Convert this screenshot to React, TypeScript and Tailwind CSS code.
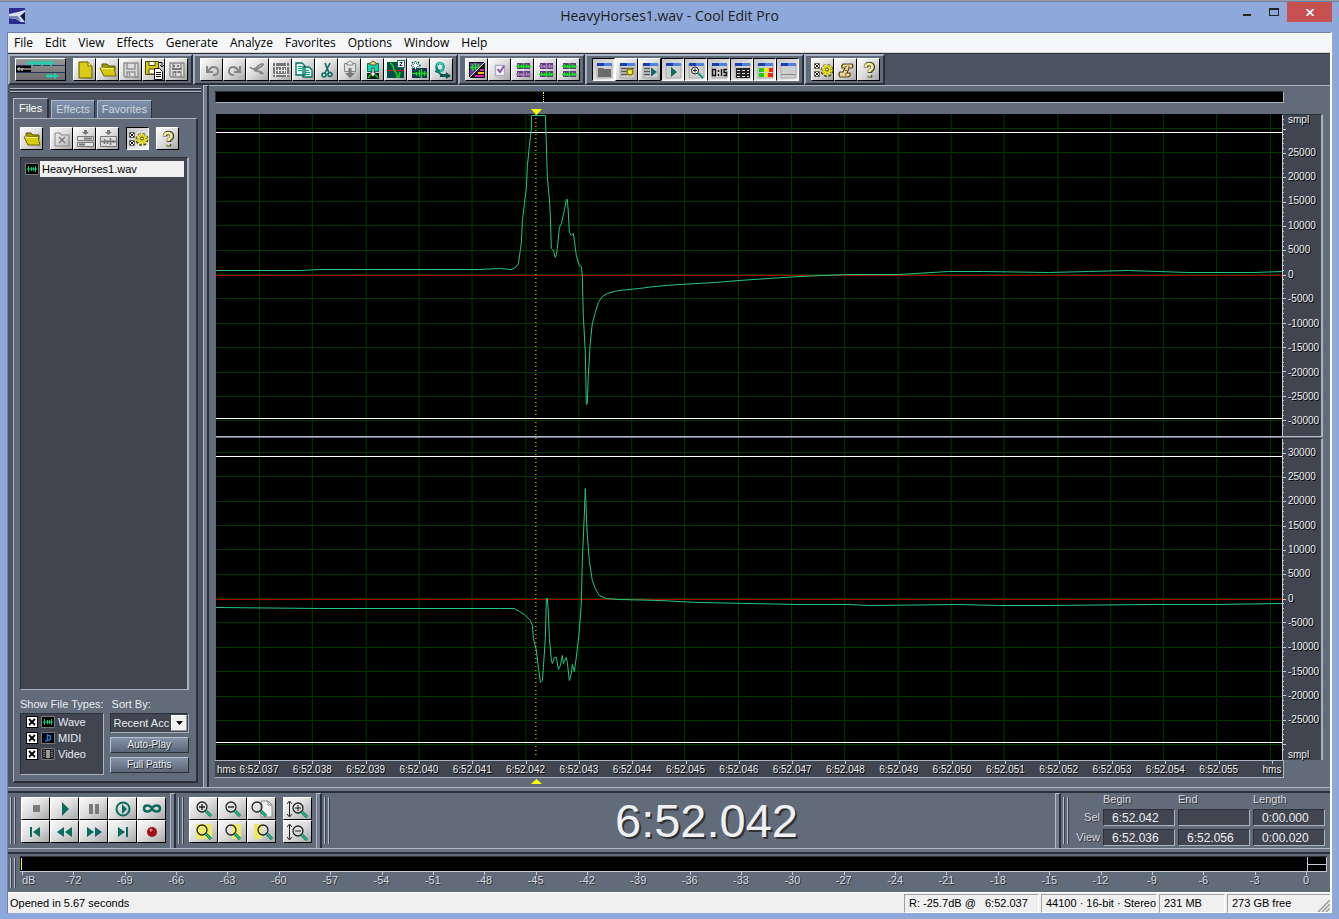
import { useState } from 'react'
import type { ReactNode } from 'react'

const menus = ['File', 'Edit', 'View', 'Effects', 'Generate', 'Analyze', 'Favorites', 'Options', 'Window', 'Help']
const times = Array.from({ length: 19 }, (_, i) => `6:52.0${37 + i}`)
const levels = Array.from({ length: 25 }, (_, i) => (i === 24 ? '0' : String(-72 + i * 3)))
const topScale = [25000, 20000, 15000, 10000, 5000, 0, -5000, -10000, -15000, -20000, -25000, -30000]
const bottomScale = [30000, 25000, 20000, 15000, 10000, 5000, 0, -5000, -10000, -15000, -20000, -25000]

const leftWave =
  '0,156 84,156 104,155 264,155 284,154 296,155 300,153 303,149 305,135 306,127 307,106 309,89 311,73 312,51 314,31 316,14 316,1 330,1 331,31 332,63 334,84 335,103 336,134 338,136 340,143 341,140 342,134 344,113 346,109 349,96 351,85 352,85 353,98 354,118 356,121 358,119 359,126 361,141 364,151 366,152 367,161 368,201 370,238 371,290 372,289 373,261 375,228 377,209 380,198 383,188 387,182 392,179 399,177 404,176 424,174 439,172 464,170 500,168 524,166 554,164 584,162 634,160 684,160 734,157 769,157 834,158 874,157 914,156 944,157 974,158 1040,158 1068,157'
const rightWave =
  '0,169 104,170 144,170 284,170 299,170 304,173 310,177 315,182 317,187 318,200 321,212 323,229 325,244 327,242 328,229 330,199 331,160 332,160 333,175 334,199 336,222 337,225 339,219 341,219 343,231 345,227 347,217 348,225 351,219 352,224 354,242 356,235 357,226 359,233 361,219 364,192 366,165 367,122 369,77 370,50 371,74 372,97 374,122 377,142 380,150 384,157 391,160 404,161 444,162 484,164 534,165 584,166 634,166 654,167 744,166 784,167 834,167 934,166 1000,166 1068,165'

const G = '#858585'
const T = '#0b6b5c'
const K = '#222222'

const lens = (
  <>
    <circle cx="9" cy="9" r="5" fill="none" stroke={K} strokeWidth="1.3" />
    <path d="M13 13l5 5" stroke="#063" strokeWidth="3" />
    <path d="M13 13l5 5" stroke="#12c8a0" strokeWidth="1.6" />
  </>
)
const gearList = (
  <>
    <path d="M2.500 4.500h5v5h-5zM2.500 12.500h5v5h-5z" fill="#fff" stroke="#666" />
    <path d="M3 5l4 4M7 5L3 9M3 13l4 4M7 13l-4 4" stroke="#111" />
    <circle cx="15" cy="11.500" r="4.500" fill="none" stroke="#4d4900" strokeWidth="4" strokeDasharray="2.200 1.300" />
    <circle cx="15" cy="11" r="4" fill="none" stroke="#e6da1c" strokeWidth="3" strokeDasharray="2 1.100" />
    <circle cx="15" cy="11" r="3.500" fill="#e6da1c" />
    <circle cx="15" cy="10.500" r="1.500" fill="#fff" stroke="#4d4900" />
  </>
)
const help = (
  <>
    <path d="M8 8.500Q8 5 11.500 5T15 8.500q0 1.500-3 3.500v2M12 16v2.500" fill="none" stroke="#4b4a3a" strokeWidth="4.500" />
    <path d="M7.500 8q0-3 3.500-3t3.500 3q0 2-3 3.500V13M11.500 15.500v2" fill="none" stroke="#f1ea94" strokeWidth="2.600" />
  </>
)
const folder = (
  <>
    <path d="M5 8V5h5l2 2h6v4" fill="#a39a00" stroke="#5d5700" />
    <path d="M3 9h14l2 8H7z" fill="#d7cb12" stroke="#6a6300" />
    <path d="M4 9.500h13" stroke="#fff36a" />
  </>
)
const windowFrame = (
  <>
    <path d="M4 5h15v14H4z" fill="#cfcfcf" stroke="#aaa" />
    <path d="M4 4h15v3H4z" fill="#4f80e0" />
    <path d="M4 4h7v3H4z" fill="#1a3fae" />
  </>
)
const stereo = (top: string, bottom: string) => (
  <>
    <path d="M5 4h13v6H5zM5 12h13v6H5z" fill="#69338e" />
    <path d="M4 7.500h15M6.500 5v4M9.500 6v3M11.500 4v6M14.500 5v4M16.500 6v3" stroke={top} strokeWidth="1.400" />
    <path d="M4 15.500h15M6.500 13v4M9.500 14v3M11.500 12v6M14.500 13v4M16.500 14v3" stroke={bottom} strokeWidth="1.400" />
  </>
)
const floppy = (c: string, fill: string) => (
  <>
    <path d="M4 4h14v14H5l-1-1z" fill={fill} stroke={c} strokeWidth="1.400" />
    <path d="M7 4v6h8V4M7 18v-5h8v5M9.500 14v3" fill="none" stroke={c} strokeWidth="1.400" />
  </>
)

const icons: Record<string, ReactNode> = {
  new: <><path d="M5 3h9l4 4v12H5z" fill="#dccb16" stroke="#5d5700" /><path d="M14 3v4h4" fill="#fff36a" stroke="#7a7300" /></>,
  folder,
  save: floppy('#919191', '#dedede'),
  saveAs: (
    <>
      <path d="M2.500 2.500h13v13h-13z" fill="#d7cb12" stroke="#4a4500" />
      <path d="M6 2.500h6v4H6zM6 10h6v5H6z" fill="#fff" stroke="#4a4500" />
      <path d="M11.500 9.500h5l3 3v8h-8z" fill="#fff" stroke="#111" />
      <path d="M13 13.500h5M13 15.500h5M13 17.500h5M16 3.500h3v3M17 6l2 2 2-2" stroke="#111" fill="none" />
    </>
  ),
  saveAll: <>{floppy('#8b8b8b', '#dedede')}<path d="M7 7h2M11 7h2M6 10h10M8 13h2M12 13h2" stroke="#777" strokeWidth="2" /></>,
  undo: <path d="M6 7v6h6M7 12q4-6 9-3 3 5-2 7h-2" fill="none" stroke={G} strokeWidth="2" />,
  redo: <path d="M16 7v6h-6M15 12q-4-6-9-3-3 5 2 7h2" fill="none" stroke={G} strokeWidth="2" />,
  repeat: <path d="M3 8q4 4 9 1t4-4-6 3 0 4 6 3M7 9l8 6" fill="none" stroke={G} strokeWidth="1.600" />,
  trim: (
    <>
      <path d="M3 4h16v14H3z" fill="#777" />
      <path d="M3 7.500h16M3 15.500h16M5.500 4v14M16.500 4v14M5 11.500h12M8.500 9v5M11.500 8v6M14.500 9v5" stroke="#e9e9e9" />
    </>
  ),
  copy: (
    <>
      <path d="M3 4h6l3 3v9H3zM10 8h6l3 3v7h-9z" fill="#d6fff2" stroke={T} strokeWidth="1.300" />
      <path d="M5 7.500h4M5 9.500h4M5 11.500h4M12 11.500h4M12 13.500h5M12 15.500h5" stroke="#0a9c80" />
    </>
  ),
  cut: (
    <>
      <path d="M9 4l4 10M14 4L9 14" stroke={T} strokeWidth="1.600" />
      <circle cx="8" cy="16" r="2" fill="none" stroke={T} strokeWidth="1.600" />
      <circle cx="14" cy="15.500" r="2" fill="none" stroke={T} strokeWidth="1.600" />
    </>
  ),
  paste: (
    <>
      <path d="M5.500 4.500h11v8h-11z" fill="#e2e2e2" stroke={G} />
      <path d="M8 6V4l3-2 3 2v2z" fill="#eee" stroke={G} />
      <path d="M9.500 9h3v5H16l-5 5-5-5h3.500z" fill="#777" />
    </>
  ),
  pasteNew: (
    <>
      <path d="M5.500 4.500h11v8h-11z" fill="#12d8a8" stroke={T} />
      <path d="M8 6V4l3-2 3 2v2z" fill="#f0e050" stroke="#555" />
      <path d="M5 14h12v6H5z" fill="#021" />
      <path d="M6 19l3-4M16 19l-3-4" stroke="#17c917" strokeWidth="1.500" />
      <path d="M10 9h2v5h2l-3 4-3-4h2z" fill="#fff" stroke="#111" strokeWidth=".7" />
    </>
  ),
  convert: (
    <>
      <path d="M2 3h17v16H2z" fill="#064e45" />
      <path d="M2 11.500h17" stroke="#e01515" />
      <path d="M5 4q3 1 4 7M9 11l3 4v3h2l1-5" fill="none" stroke="#15d81c" strokeWidth="1.500" />
      <path d="M12.500 1.500h7v7h-7z" fill="#fff" stroke={T} />
      <path d="M14.500 3.500h3l-3 3h3" stroke="#333" fill="none" />
    </>
  ),
  noise: (
    <>
      <path d="M4 9h15v10H4z" fill="#1a2f53" />
      <path d="M4 14.500h16M8.500 13v4M11.500 11v7M13.500 10v9M16.500 12v5" stroke="#18d528" strokeWidth="1.400" />
      <path d="M7.500 2v10M3 6.500h10M4 3l7 7M11 3l-7 7" stroke={T} strokeWidth="1.600" />
      <path d="M7.500 3v7M4 6.500h7M5 4l5 5M10 4L5 9" stroke="#fff" />
    </>
  ),
  loop: (
    <>
      <ellipse cx="9" cy="8" rx="3.500" ry="4" fill="none" stroke="#067d6b" strokeWidth="2.500" />
      <path d="M6 8q0-4 3-4t3 4-3 4" fill="none" stroke="#25e8bf" strokeWidth="1.300" />
      <path d="M4 12l3 1 4 3" fill="none" stroke="#067d6b" strokeWidth="2" />
      <path d="M9 15h6v-2l5 4-5 3v-2H9z" fill="#07594f" />
    </>
  ),
  spectral: (
    <>
      <path d="M3 3h16v16H3z" fill="#111" />
      <path d="M4 4h14L4 18z" fill="#6f379b" />
      <path d="M4 8.500h9M6.500 5v7M9.500 4v7M12.500 5v4" stroke="#14dd20" strokeWidth="1.500" />
      <path d="M9 17h9M14 11h4" stroke="#e020c0" strokeWidth="2" />
      <path d="M12 14h6" stroke="#ffc000" strokeWidth="2" />
      <path d="M3 19L19 3" stroke="#ddd" />
    </>
  ),
  check: <><path d="M6.500 6.500h9v10h-9z" fill="#fff" stroke="#b7a6cc" strokeWidth="1.400" /><path d="M8.500 10l2.500 3 4-6" fill="none" stroke="#8556b6" strokeWidth="2" /></>,
  left: stereo('#13e316', '#9d83ae'),
  right: stereo('#9d83ae', '#13e316'),
  both: stereo('#13e316', '#13e316'),
  winTab: <>{windowFrame}<path d="M5 9h5l1 1h7v8H5z" fill="#6a6a6a" /></>,
  winQ: <>{windowFrame}<path d="M5 9.500h13M5 12.500h6M5 15.500h6" stroke="#555" strokeWidth="1.500" /><circle cx="14" cy="13" r="3" fill="#f2e84c" stroke="#8a8300" strokeWidth="1.500" /></>,
  winPlay: <>{windowFrame}<path d="M5 9.500h6M5 12.500h6M5 15.500h6" stroke="#555" strokeWidth="1.500" /><path d="M12 8.500l6 4.500-6 4.500z" fill={T} /></>,
  play2: <>{windowFrame}<path d="M9 8l6 5-6 5z" fill={T} /></>,
  zoom: (
    <>
      {windowFrame}
      <circle cx="10" cy="11.500" r="3.500" fill="#eee" stroke={K} />
      <path d="M8 11.500h4M10 9.500v4" stroke={K} />
      <path d="M13 14l5 5" stroke="#07977a" strokeWidth="2" />
    </>
  ),
  clock: <>{windowFrame}<path d="M4.500 10.500h3v6h-3zM10.500 11v2M10.500 15v2M13.500 10v7M19 10.500h-3v3h2.500v3H15.500" fill="none" stroke="#111" strokeWidth="1.400" /></>,
  keys: (
    <>
      {windowFrame}
      <path d="M5 9h14v10H5z" fill="#222" />
      <path d="M6 11.500h3M11 11.500h3M16 11.500h2M6 14.500h3M11 14.500h3M16 14.500h2M6 17.500h3M11 17.500h3M16 17.500h2" stroke="#ddd" />
    </>
  ),
  meter: (
    <>
      {windowFrame}
      <path d="M5 9h14v4H5zM5 14h14v4H5z" fill="#1dcb1d" />
      <path d="M10 9h5v4h-5zM10 14h5v4h-5z" fill="#f1e51f" />
      <path d="M15 9h4v4h-4zM14 14h5v4h-5z" fill="#ee2222" />
    </>
  ),
  status: <>{windowFrame}<path d="M4 15.500h15" stroke="#888" /></>,
  gearList,
  scroll: (
    <>
      <path d="M8 5h9q2 2 0 4h-3l-2 5h3q1 3-2 4H5q-2-3 0-5h3l2-4H7q-1-2 1-4z" fill="#ead79c" stroke="#57400e" strokeWidth="1.200" />
      <path d="M14 9q1-2-1-2M12 14q-3 0-1 3M10 7.500h2M10 11.500h2" fill="none" stroke="#8c6b28" />
    </>
  ),
  help,
  closeFile: <><path d="M4 7V5h5l1 2h8v11H4z" fill="none" stroke={G} /><path d="M8 9l6 6M14 9l-6 6" stroke="#777" strokeWidth="1.400" /></>,
  insert: (
    <>
      <path d="M3.500 8.500h16v4h-16zM3.500 14.500h16v4h-16z" fill="#e6e6e6" stroke="#777" />
      <path d="M10 10.500h8M5 16.500h6" stroke="#777" strokeWidth="2" />
      <path d="M10 2h3v2h2l-3.500 3L8 4h2z" fill="#777" />
    </>
  ),
  insertWave: (
    <>
      <path d="M3.500 8.500h16v10h-16z" fill="#ddd" stroke="#777" />
      <path d="M4 13.500h15M7.500 11v5M10.500 12v4M13.500 10v7M16.500 12v3" stroke="#777" strokeWidth="1.500" />
      <path d="M10 2h3v2h2l-3.500 3L8 4h2z" fill="#777" />
    </>
  ),
  stop: <path d="M8 7h7v7H8z" fill="#7b7b7b" />,
  play: <path d="M8 4l7 7-7 7z" fill={T} />,
  pause: <path d="M6 6h4v10H6zM12 6h4v10h-4z" fill="#7b7b7b" />,
  playEnd: <><circle cx="11" cy="11" r="6.500" fill="none" stroke={T} strokeWidth="2" /><path d="M10 6l5 5-5 5z" fill={T} /></>,
  infinity: <path d="M11 10.500c-2-4-8-4-8 0s6 4 8 0 8-4 8 0-6 4-8 0z" fill="none" stroke={T} strokeWidth="2.500" />,
  first: <path d="M5 6h2v10H5zM15 6v10l-7-5z" fill={T} />,
  rewind: <path d="M10 6v10l-7-5zM18 6v10l-7-5z" fill={T} />,
  forward: <path d="M4 6v10l7-5zM12 6v10l7-5z" fill={T} />,
  last: <path d="M6 6v10l7-5zM14 6h2v10h-2z" fill={T} />,
  record: <><circle cx="11" cy="11" r="5" fill="#a30f16" /><circle cx="10" cy="9" r="1.500" fill="#e98a8a" /></>,
  zoomIn: <>{lens}<path d="M6 9h6M9 6v6" stroke={K} strokeWidth="1.400" /></>,
  zoomOut: <>{lens}<path d="M6 9h6" stroke={K} strokeWidth="1.400" /></>,
  zoomFull: <><path d="M10 3h7l4 4v12H10z" fill="#f2f2f2" stroke="#888" /><path d="M17 3v4h4" fill="none" stroke="#888" /><g transform="translate(-3 0)">{lens}</g></>,
  zoomSel: <><path d="M3 3h16v15H3z" fill="#eee86b" />{lens}</>,
  zoomLeft: <><path d="M10 3h9v15h-9z" fill="#eee86b" />{lens}</>,
  zoomRight: <><path d="M3 3h8v15H3z" fill="#eee86b" /><g transform="translate(3 0)">{lens}</g></>,
  vertIn: <><path d="M2.500 4v14M0 6l2.500-3L5 6M0 16l2.500 3L5 16" stroke={K} fill="none" /><g transform="translate(2 1)">{lens}<path d="M6 9h6M9 6v6" stroke={K} /></g></>,
  vertOut: <><path d="M2.500 4v14M0 6l2.500-3L5 6M0 16l2.500 3L5 16" stroke={K} fill="none" /><g transform="translate(2 1)">{lens}<path d="M6 9h6" stroke={K} /></g></>,
}

function IconButton({ name, pressed, wide }: { name: string; pressed?: boolean; wide?: boolean }) {
  return (
    <button
      aria-label={name}
      className={`${wide ? 'w-[29px]' : 'w-[23px]'} h-[23px] shrink-0 flex items-center justify-center border bg-linear-to-br ${
        pressed
          ? 'border-t-black border-l-black border-r-white border-b-white from-[#c4c4c4] to-[#f4f4f4]'
          : 'border-t-white border-l-white border-r-black border-b-black from-[#fafafa] via-[#dcdcdc] to-[#a8a8a8]'
      }`}
    >
      <svg className="w-[22px] h-[22px] shrink-0" viewBox="0 0 22 22">{icons[name]}</svg>
    </button>
  )
}

function ToolGroup({ children }: { children: ReactNode }) {
  return (
    <div className="flex items-center h-[31px] pl-[5px] pr-[3px] bg-[#626b7a] border-2 border-t-[#a9b2c0] border-l-[#a9b2c0] border-r-[#2b3038] border-b-[#2b3038]">
      {children}
    </div>
  )
}

function Gripper() {
  return (
    <div className="flex gap-[2px] py-1 shrink-0">
      <div className="w-[2px] border-l border-[#b4bdca] bg-[#3a404a]" />
      <div className="w-[2px] border-l border-[#b4bdca] bg-[#3a404a]" />
    </div>
  )
}

function Splitter() {
  return <div className="w-[6px] shrink-0 border-l border-t border-l-[#b0b9c7] border-t-[#b0b9c7] border-r-2 border-r-[#2b3038] bg-[#737d8d]" />
}

function Divider() {
  return <div className="h-[6px] shrink-0 border-t border-t-[#b0b9c7] border-b-2 border-b-[#2b3038] bg-[#6a7483]" />
}

function Channel({ points, scale, bottom }: { points: string; scale: number[]; bottom?: boolean }) {
  const lines = Array.from({ length: 13 }, (_, i) => 14 + Math.round(i * 24.35))
  return (
    <div className="flex flex-1 min-h-0">
      <div className="flex-1 min-w-0 bg-black">
        <svg className="block w-full h-full" viewBox="0 0 1068 322" preserveAspectRatio="none" shapeRendering="crispEdges" fill="none">
          {lines.map(y => <path key={y} d={`M0 ${y + 0.5}H1068`} stroke="#003800" />)}
          {Array.from({ length: 20 }, (_, i) => Math.round(43 + i * 53.3)).map(x => <path key={x} d={`M${x + 0.5} 0V322`} stroke="#003800" />)}
          <path d="M0 161.500H1068" stroke="#a80000" />
          <path d="M0 18.500H1068M0 304.500H1068" stroke="#ffffff" />
          <polyline points={points} stroke="#22c884" transform="translate(0 0.5)" />
          <path d={bottom ? 'M320.500 0V319' : 'M320.500 0V322'} stroke="#ffff00" strokeDasharray="1 3" />
        </svg>
      </div>
      <div className="w-[41px] shrink-0 flex border-r-2 border-t border-t-[#2b3038] border-[#a9b2c0] bg-[#40454f]">
        <svg className="w-1 h-full shrink-0 border-l border-[#c5ccd6]" viewBox="0 0 4 322" preserveAspectRatio="none" shapeRendering="crispEdges">
          {Array.from({ length: 64 }, (_, i) => <path key={i} d={`M0 ${Math.round(4 + i * 4.87) + 0.5}h${i % 5 === 2 ? 4 : 1}`} stroke="#dde1e7" />)}
        </svg>
        <div className="flex-1 flex flex-col pl-[2px] text-[10px] text-[#eef0f3] [text-shadow:1px_1px_0_#000]">
          {!bottom && <div className="h-[37px] shrink-0 leading-[10px]">smpl</div>}
          <div className={`flex-1 flex flex-col justify-between ${bottom ? 'pt-[13px]' : 'pb-[15px]'}`}>
            {scale.map(v => <div key={v} className="h-0 flex items-center">{v}</div>)}
          </div>
          {bottom && <div className="h-[40px] shrink-0 flex items-end leading-[11px]">smpl</div>}
        </div>
      </div>
    </div>
  )
}

function WaveIcon() {
  return (
    <svg className="w-[14px] h-3 shrink-0" viewBox="0 0 14 12">
      <path d="M.5.5h13v11H.5z" fill="#000" stroke="#777" />
      <path d="M2 6h10M3.500 3v6M6.500 4v4M8.500 4v4M10.500 3v6" stroke="#12d27c" />
    </svg>
  )
}

function FileType({ label, children }: { label: string; children: ReactNode }) {
  return (
    <label className="flex items-center h-4 gap-[3px]">
      <span className="relative flex w-3 h-3">
        <input type="checkbox" defaultChecked className="peer appearance-none w-3 h-3 bg-white border border-black" />
        <svg className="absolute inset-0 hidden peer-checked:block pointer-events-none" viewBox="0 0 12 12">
          <path d="M3 3l6 6M9 3L3 9" stroke="#000" strokeWidth="1.800" />
        </svg>
      </span>
      {children}
      {label}
    </label>
  )
}

function Sidebar() {
  const [tab, setTab] = useState('Files')
  return (
    <aside className="w-[195px] shrink-0 flex flex-col bg-[#4c5462] pl-[5px] pr-[5px] pb-1 text-[#e9ecf0]">
      <div className="mx-[-3px] mt-[3px] h-[2px] shrink-0 border-t border-[#b0b9c7] bg-[#2b3038]" />
      <div className="mx-[-3px] mt-[1px] h-[2px] shrink-0 border-t border-[#b0b9c7] bg-[#2b3038]" />
      <div className="flex items-end mt-[5px] gap-[2px] shrink-0">
        {['Files', 'Effects', 'Favorites'].map(t => (
          <button
            key={t}
            onClick={() => setTab(t)}
            className={
              tab === t
                ? 'h-5 px-[5px] bg-[#626b7a] border-t border-l border-r-2 border-t-[#b0b9c7] border-l-[#b0b9c7] border-r-[#2b3038] text-white'
                : 'h-[18px] px-1 bg-linear-to-b from-[#7f93ae] to-[#66758c] border-t border-l border-r border-t-[#b0b9c7] border-l-[#b0b9c7] border-r-[#2b3038] text-[#d0d6de]'
            }
          >
            {t}
          </button>
        ))}
      </div>
      <div className="flex-1 min-h-0 flex flex-col bg-[#626b7a] border border-t-[#a9b2c0] border-l-[#a9b2c0] border-r-2 border-b-2 border-r-[#2b3038] border-b-[#2b3038] pl-[6px] pr-[7px] pb-[6px]">
        <div className="flex h-[38px] pt-[1px] items-center shrink-0">
          <IconButton name="folder" />
          <div className="flex ml-[7px] mr-[7px]">
            <IconButton name="closeFile" />
            <IconButton name="insert" />
            <IconButton name="insertWave" />
          </div>
          <IconButton name="gearList" pressed />
          <div className="ml-[7px]"><IconButton name="help" /></div>
        </div>
        <ul className="flex-1 min-h-0 bg-[#40454f] border border-t-[#2b3038] border-l-[#2b3038] border-r-2 border-r-[#a9b2c0] border-b-[#a9b2c0] pl-1 pt-[3px] pr-[3px]">
          <li>
            <button className="w-full flex items-center gap-[1px] text-black">
              <WaveIcon />
              <span className="flex-1 text-left bg-[#f0f0f0] leading-4 pl-[2px]">HeavyHorses1.wav</span>
            </button>
          </li>
        </ul>
        <div className="flex mt-1 gap-[6px] shrink-0">
          <fieldset className="w-[83px] shrink-0 flex flex-col">
            <legend className="h-[19px] pt-[2px] whitespace-nowrap">Show File Types:</legend>
            <div className="h-[62px] bg-[#40454f] border border-t-[#2b3038] border-l-[#2b3038] border-r-[#a9b2c0] border-b-[#a9b2c0] pl-[5px]">
              <FileType label="Wave"><WaveIcon /></FileType>
              <FileType label="MIDI">
                <svg className="w-[14px] h-3" viewBox="0 0 14 12">
                  <path d="M.5.5h13v11H.5z" fill="#000" stroke="#777" />
                  <path d="M6.500 9V3l3 1v4M4 9h2M7 8h2" fill="none" stroke="#1f7be0" strokeWidth="1.500" />
                </svg>
              </FileType>
              <FileType label="Video">
                <svg className="w-[14px] h-3" viewBox="0 0 14 12">
                  <path d="M.5.5h13v11H.5z" fill="#222" stroke="#777" />
                  <path d="M5 2h4v8H5z" fill="#999" />
                  <path d="M3 2v8M11 2v8" stroke="#ccc" strokeDasharray="1 1" />
                </svg>
              </FileType>
            </div>
          </fieldset>
          <div className="flex-1 min-w-0 flex flex-col">
            <label htmlFor="sort" className="h-[19px] pt-[2px] pl-[2px]">Sort By:</label>
            <div className="relative h-5">
              <select id="sort" className="appearance-none w-full h-5 pl-[3px] pr-[19px] bg-[#40454f] border border-t-[#2b3038] border-l-[#2b3038] border-r-[#a9b2c0] border-b-[#a9b2c0] text-[#e9ecf0]">
                <option>Recent Access</option>
                <option>Filename</option>
              </select>
              <span className="absolute right-[2px] top-[2px] w-4 h-4 bg-[#f0f0f0] border border-white border-r-[#999] border-b-[#999] flex items-center justify-center pointer-events-none">
                <svg className="w-[7px] h-1" viewBox="0 0 7 4"><path d="M0 0h7L3.500 4z" /></svg>
              </span>
            </div>
            {['Auto-Play', 'Full Paths'].map(t => (
              <button key={t} className="mt-1 h-4 text-[10px] leading-none bg-linear-to-b from-[#8593a8] to-[#5c6778] border border-t-[#b8c3d2] border-l-[#b8c3d2] border-r-[#2b3038] border-b-[#2b3038] [text-shadow:1px_1px_0_#222]">
                {t}
              </button>
            ))}
          </div>
        </div>
      </div>
    </aside>
  )
}

function Editor() {
  return (
    <main className="flex-1 min-w-0 flex flex-col bg-[#626b7a] border-t border-[#a9b2c0] pl-[6px] pr-[7px] pb-[9px]">
      <div className="relative mt-[5px] mr-[39px] h-3 shrink-0 bg-black border border-t-[#2b3038] border-l-[#2b3038] border-r-[#a9b2c0] border-b-[#a9b2c0]">
        <div className="absolute top-0 bottom-0 left-[30.600%] border-l border-dotted border-[#ffff00]" />
      </div>
      <div className="relative mt-[11px] flex-1 min-h-0 flex flex-col pl-[1px]">
        <Channel points={leftWave} scale={topScale} />
        <div className="h-[2px] shrink-0 bg-[#6a7483] border-t border-[#b0b9c7]" />
        <Channel points={rightWave} scale={bottomScale} bottom />
        <svg className="absolute left-[28.500%] -top-[5px] w-[11px] h-[6px]" viewBox="0 0 11 6"><path d="M0 0h11L5.500 6z" fill="#ffff00" /></svg>
      </div>
      <div className="relative h-[18px] shrink-0 mr-[39px] flex bg-[#40454f] border-t border-b border-r border-[#a9b2c0] text-[10px] text-[#eef0f3] [text-shadow:1px_1px_0_#000]">
        <span className="w-11 shrink-0 pl-[2px] leading-[17px]">hms</span>
        <div className="flex-1 flex justify-between mr-[11px]">
          {[...times, 'hms'].map(t => (
            <div key={t} className="relative w-0 flex justify-center leading-[17px]">
              <span className="absolute top-0 left-0 h-[3px] border-l border-[#c5ccd6]" />
              {t}
            </div>
          ))}
        </div>
        <svg className="absolute left-[29.600%] top-[18px] w-[11px] h-[5px]" viewBox="0 0 11 5"><path d="M0 5h11L5.500 0z" fill="#ffff00" /></svg>
      </div>
    </main>
  )
}

function TimeField({ label, value }: { label: string; value: string }) {
  return (
    <input
      aria-label={label}
      defaultValue={value}
      className="w-[72px] h-[17px] pl-2 text-xs bg-[#40454f] border border-t-[#2b3038] border-l-[#2b3038] border-r-[#a9b2c0] border-b-[#a9b2c0] text-[#eef0f3]"
    />
  )
}

function Transport() {
  return (
    <div className="h-[55px] shrink-0 flex pl-[2px] text-[#d5dae1]">
      <Gripper />
      <div className="grid grid-cols-5 content-start pt-1 ml-[5px] mr-1">
        {['stop', 'play', 'pause', 'playEnd', 'infinity', 'first', 'rewind', 'forward', 'last', 'record'].map(n => <IconButton key={n} name={n} wide />)}
      </div>
      <Splitter />
      <div className="ml-[2px] flex"><Gripper /></div>
      <div className="grid grid-cols-3 content-start pt-1 ml-[5px]">
        {['zoomIn', 'zoomOut', 'zoomFull', 'zoomSel', 'zoomLeft', 'zoomRight'].map(n => <IconButton key={n} name={n} wide />)}
      </div>
      <div className="pt-1 ml-[7px] mr-1">
        <IconButton name="vertIn" wide />
        <IconButton name="vertOut" wide />
      </div>
      <Splitter />
      <div className="ml-[2px] flex"><Gripper /></div>
      <div className="flex-1 flex items-center justify-center pl-7 text-[47px] leading-none text-[#eef0f3] [text-shadow:2px_2px_0_#333]">6:52.042</div>
      <Splitter />
      <div className="ml-[2px] flex"><Gripper /></div>
      <div className="grid grid-cols-[27px_72px_72px_72px] grid-rows-[13px_17px_17px] gap-[3px] content-start items-center ml-1 mr-[5px] [text-shadow:1px_1px_0_#333]">
        <span />
        <span>Begin</span>
        <span>End</span>
        <span>Length</span>
        <span className="text-right">Sel</span>
        <TimeField label="Selection begin" value="6:52.042" />
        <TimeField label="Selection end" value="" />
        <TimeField label="Selection length" value="0:00.000" />
        <span className="text-right">View</span>
        <TimeField label="View begin" value="6:52.036" />
        <TimeField label="View end" value="6:52.056" />
        <TimeField label="View length" value="0:00.020" />
      </div>
    </div>
  )
}

function Levels() {
  return (
    <div className="h-[38px] shrink-0 flex pl-[2px]">
      <Gripper />
      <div className="flex-1 ml-1 mr-[3px] pt-[2px] text-[#d5dae1]">
        <div className="flex h-4 bg-black border-t border-t-[#2b3038] border-b border-b-[#c5ccd6]">
          <div className="ml-[1px] my-[1px] w-px bg-[#ffff00]" />
          <div className="flex-1" />
          <div className="w-5 border-l border-r border-[#c5ccd6] flex flex-col justify-center"><div className="border-t border-[#c5ccd6]" /></div>
        </div>
        <div className="flex justify-between ml-[2px] mr-[21px] text-[11px] [text-shadow:1px_1px_0_#333]">
          <div className="relative w-0 leading-4">
            <span className="absolute top-0 left-0 h-[3px] border-l border-[#c5ccd6]" />dB
          </div>
          {levels.map(l => (
            <div key={l} className="relative w-0 flex justify-center leading-4">
              <span className="absolute top-0 left-0 h-[3px] border-l border-[#c5ccd6]" />
              {l}
            </div>
          ))}
        </div>
      </div>
    </div>
  )
}

function Status() {
  const cell = 'border border-t-[#a0a0a0] border-l-[#a0a0a0] border-r-white border-b-white pl-1 mr-[2px] shrink-0 flex items-center whitespace-pre'
  return (
    <footer className="h-[21px] shrink-0 flex bg-[#f0f0f0] border-t border-white text-black pt-[1px] pl-[2px]">
      <span className="flex-1 flex items-center">Opened in 5.67 seconds</span>
      <span className={`${cell} w-[135px]`}>{'R: -25.7dB @   6:52.037'}</span>
      <span className={`${cell} w-[116px]`}>44100 · 16-bit · Stereo</span>
      <span className={`${cell} w-[66px]`}>231 MB</span>
      <span className="w-[103px] shrink-0 pl-1 flex items-center justify-between border border-r-0 border-t-[#a0a0a0] border-l-[#a0a0a0] border-b-white">
        273 GB free
        <svg className="w-3 h-3 self-end" viewBox="0 0 12 12"><path d="M0 12L12 0M4 12l8-8M8 12l4-4" stroke="#999" strokeWidth="1.500" /></svg>
      </span>
    </footer>
  )
}

export default function App() {
  return (
    <div className="h-screen flex flex-col bg-[#8fa8da] pb-[6px] border-t border-[#9a9a98] font-['Liberation_Sans',Arial,sans-serif] text-[11px]">
      <header className="relative h-[31px] shrink-0 flex items-start justify-between pl-[9px] pr-[7px] border-t border-[#6d81ad]">
        <svg className="w-4 h-4 mt-[6px]" viewBox="0 0 16 16">
          <path d="M0 0h16v16H0z" fill="#2b2c8f" />
          <path d="M0 6L9 4l7-2v2l-5 4 5 6h-4L7 11 0 10z" fill="#d5ddef" />
          <path d="M0 8h9l3 5-5-2-7-1z" fill="#7688b8" />
          <path d="M16 4l-4 4 4 5z" fill="#15153a" />
        </svg>
        <h1 className="absolute inset-x-0 top-[3px] text-center text-sm leading-[22px] text-[#1c1c1c] font-['Open_Sans',sans-serif] pointer-events-none">HeavyHorses1.wav - Cool Edit Pro</h1>
        <div className="flex">
          <button aria-label="Minimize" className="w-[27px] h-5 flex justify-center items-end pb-[6px]"><span className="w-2 h-[2px] bg-[#222]" /></button>
          <button aria-label="Maximize" className="w-[27px] h-5 flex justify-center items-center"><span className="w-[10px] h-2 border border-t-2 border-[#222]" /></button>
          <button aria-label="Close" className="w-[45px] h-5 bg-[#c75050] flex justify-center items-center">
            <svg className="w-2 h-[7px]" viewBox="0 0 8 7"><path d="M.5 0l7 7M7.500 0l-7 7" stroke="#fff" strokeWidth="1.700" /></svg>
          </button>
        </div>
      </header>

      <div className="flex-1 min-h-0 mx-[7px] flex flex-col border-l border-t border-[#6d81ad] border-r-2 border-r-white bg-[#626b7a]">
        <nav className="h-5 shrink-0 flex items-center bg-[#f5f6f7] border-b border-[#d8d8d8] text-[12px] text-black font-['Open_Sans',sans-serif]">
          {menus.map(m => <button key={m} className="px-[6px]">{m}</button>)}
        </nav>

        <div className="h-8 shrink-0 flex bg-[#4c5462] border-t border-[#2b3038]">
          <ToolGroup>
            <button aria-label="Multitrack view" className="w-[51px] h-[23px] mr-[7px] border border-t-white border-l-white border-r-black border-b-black bg-linear-to-b from-[#999] to-[#6b6b6b]">
              <svg className="w-full h-full" viewBox="0 0 49 21">
                <path d="M0 6.500h49M0 13.500h49" stroke="#23395e" />
                <path d="M0 7h15v6H0z" fill="#000" />
                <path d="M11 4h27M13 2v4M16 1v6M19 2v4M23 2v4M26 1v6M29 2v4M32 2v4M35 1v6M30 17h13M32 15v4M35 15v4M39 14v6" stroke="#16d8b0" strokeWidth="1.600" />
                <path d="M1 10h14M3 8v4M6 9v3" stroke="#eee" />
              </svg>
            </button>
            {['new', 'folder', 'save', 'saveAs', 'saveAll'].map(n => <IconButton key={n} name={n} />)}
          </ToolGroup>
          <ToolGroup>
            {['undo', 'redo', 'repeat', 'trim', 'copy', 'cut', 'paste', 'pasteNew', 'convert', 'noise', 'loop'].map(n => <IconButton key={n} name={n} />)}
          </ToolGroup>
          <ToolGroup>
            {['spectral', 'check', 'left', 'right', 'both'].map(n => <IconButton key={n} name={n} />)}
          </ToolGroup>
          <ToolGroup>
            {['winTab', 'winQ', 'winPlay', 'play2', 'zoom', 'clock', 'keys', 'meter', 'status'].map(n => (
              <IconButton key={n} name={n} pressed={n !== 'winQ' && n !== 'winPlay'} />
            ))}
          </ToolGroup>
          <ToolGroup>
            {['gearList', 'scroll', 'help'].map(n => <IconButton key={n} name={n} />)}
          </ToolGroup>
        </div>

        <div className="flex-1 min-h-0 flex">
          <Sidebar />
          <Splitter />
          <Editor />
        </div>
        <Divider />
        <Transport />
        <Divider />
        <Levels />
        <Status />
      </div>
    </div>
  )
}
